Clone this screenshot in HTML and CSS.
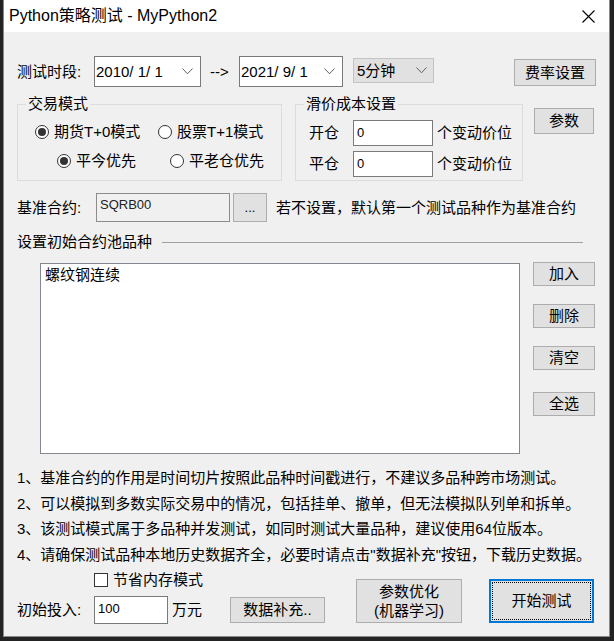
FILE: index.html
```html
<!DOCTYPE html>
<html lang="zh-CN">
<head>
<meta charset="utf-8">
<title>Python策略测试 - MyPython2</title>
<link rel="stylesheet" href="styles.css">
</head>
<body>
<div class="window">
  <div class="titlebar">
    <span class="title">Python策略测试 - MyPython2</span>
    <svg class="close" width="13" height="13" viewBox="0 0 13 13"><path d="M0.5 0.5L12.5 12.5M12.5 0.5L0.5 12.5" stroke="#000" stroke-width="1.1" fill="none"/></svg>
  </div>
  <div class="content">
    <div class="row-period">
      <span class="lbl lbl-period">测试时段:</span>
      <div class="datebox d1">
        <span class="datetext">2010/ 1/ 1</span>
        <svg class="chev" width="11" height="7" viewBox="0 0 11 7"><polyline points="0.5,0.5 5.5,5.8 10.5,0.5" fill="none" stroke="#606060" stroke-width="1"/></svg>
      </div>
      <span class="arrow">--&gt;</span>
      <div class="datebox d2">
        <span class="datetext">2021/ 9/ 1</span>
        <svg class="chev" width="11" height="7" viewBox="0 0 11 7"><polyline points="0.5,0.5 5.5,5.8 10.5,0.5" fill="none" stroke="#606060" stroke-width="1"/></svg>
      </div>
      <div class="combo">
        <span>5分钟</span>
        <svg class="chev" width="11" height="7" viewBox="0 0 11 7"><polyline points="0.5,0.5 5.5,5.8 10.5,0.5" fill="none" stroke="#606060" stroke-width="1"/></svg>
      </div>
      <button class="btn btn-fee">费率设置</button>
    </div>

    <div class="row-groups">
      <fieldset class="group g1">
        <legend>交易模式</legend>
        <div class="g1-inner">
          <div class="radio-row">
            <label class="radio-item ri1"><span class="radio"><span class="dot"></span></span>期货T+0模式</label>
            <label class="radio-item"><span class="radio"></span>股票T+1模式</label>
          </div>
          <div class="radio-row rr2">
            <label class="radio-item ri3"><span class="radio"><span class="dot"></span></span>平今优先</label>
            <label class="radio-item"><span class="radio"></span>平老仓优先</label>
          </div>
        </div>
      </fieldset>
      <fieldset class="group g2">
        <legend>滑价成本设置</legend>
        <div class="g2-inner">
          <div class="slip-row">
            <span class="slip-lbl">开仓</span>
            <div class="field slip-in">0</div>
            <span class="unit">个变动价位</span>
          </div>
          <div class="slip-row sr2">
            <span class="slip-lbl">平仓</span>
            <div class="field slip-in">0</div>
            <span class="unit">个变动价位</span>
          </div>
        </div>
      </fieldset>
      <button class="btn btn-param">参数</button>
    </div>

    <div class="row-base">
      <span class="lbl lbl-base">基准合约:</span>
      <div class="field ref-in">SQRB00</div>
      <button class="btn btn-browse">...</button>
      <span class="hint">若不设置，默认第一个测试品种作为基准合约</span>
    </div>

    <div class="row-sep">
      <span>设置初始合约池品种</span>
      <div class="sep-line"></div>
    </div>

    <div class="row-list">
      <div class="listbox">螺纹钢连续</div>
      <div class="side-btns">
        <button class="btn side">加入</button>
        <button class="btn side">删除</button>
        <button class="btn side">清空</button>
        <button class="btn side last">全选</button>
      </div>
    </div>

    <div class="notes">
      <div>1、基准合约的作用是时间切片按照此品种时间戳进行，不建议多品种跨市场测试。</div>
      <div>2、可以模拟到多数实际交易中的情况，包括挂单、撤单，但无法模拟队列单和拆单。</div>
      <div>3、该测试模式属于多品种并发测试，如同时测试大量品种，建议使用64位版本。</div>
      <div>4、请确保测试品种本地历史数据齐全，必要时请点击"数据补充"按钮，下载历史数据。</div>
    </div>

    <div class="row-bottom">
      <div class="bottom-left">
        <label class="cb-row"><span class="checkbox"></span>节省内存模式</label>
        <div class="in-row">
          <span class="lbl lbl-init">初始投入:</span>
          <div class="field init-in">100</div>
          <span class="unit">万元</span>
        </div>
      </div>
      <button class="btn btn-data">数据补充..</button>
      <button class="btn btn-opt"><span>参数优化</span><span>(机器学习)</span></button>
      <button class="btn btn-start">开始测试</button>
    </div>
  </div>
</div>
</body>
</html>
```

FILE: styles.css
```css
* { box-sizing: border-box; }
html, body { margin: 0; padding: 0; }
body {
  width: 614px;
  height: 641px;
  overflow: hidden;
  background: #232323;
  font-family: "Liberation Sans", "Noto Sans CJK SC", sans-serif;
  font-size: 15px;
  color: #000;
}
.window {
  margin-left: 3px;
  width: 607px;
  height: 637px;
  background: #f0f0f0;
  border: 1px solid #8a8a8a;
  border-top: none;
  display: flex;
  flex-direction: column;
}
.titlebar {
  flex: none;
  height: 32px;
  background: #fff;
  display: flex;
  align-items: center;
  justify-content: space-between;
  padding-left: 5px;
  padding-right: 14px;
}
.title { font-size: 16px; line-height: 20px; }
.content {
  padding: 0 13px;
  display: flex;
  flex-direction: column;
}
.btn {
  font: inherit;
  color: #000;
  background: #e1e1e1;
  border: 1px solid #adadad;
  padding: 0;
  margin: 0;
  display: flex;
  align-items: center;
  justify-content: center;
  line-height: 20px;
}
.field {
  background: #fff;
  border: 1px solid #7a7a7a;
  font-size: 13px;
  line-height: 16px;
  padding-left: 3px;
}
.lbl { line-height: 20px; }

/* row 1 */
.row-period {
  margin-top: 24px;
  display: flex;
  align-items: flex-start;
  height: 31px;
}
.lbl-period { width: 77px; line-height: 31px; }
.datebox {
  height: 31px;
  background: #fff;
  border: 1px solid #7a7a7a;
  display: flex;
  align-items: center;
  justify-content: space-between;
  padding: 0 7px 0 1px;
}
.datetext { white-space: pre; line-height: 20px; padding-top: 1px; }
.d1 { width: 107px; }
.d2 { width: 104px; }
.arrow { width: 38px; padding-left: 9px; line-height: 31px; }
.combo {
  margin-left: 10px;
  margin-top: 2px;
  width: 81px;
  height: 25px;
  background: #e1e1e1;
  border: 1px solid #c4c4c4;
  display: flex;
  align-items: center;
  justify-content: space-between;
  padding: 0 6px 0 3px;
  line-height: 20px;
}
.btn-fee { margin-left: auto; margin-top: 3px; width: 82px; height: 27px; }

/* row 2 */
.row-groups {
  margin-top: 7px;
  display: flex;
  align-items: flex-start;
}
.group {
  margin: 0;
  padding: 0;
  border: 1px solid #dcdcdc;
  min-width: 0;
}
.group legend {
  margin-left: 8px;
  padding: 0 2px;
  line-height: 20px;
}
.g1 { width: 265px; }
.g1-inner { padding: 8px 0 9px 17px; }
.radio-row { display: flex; align-items: center; height: 20px; }
.rr2 { margin-top: 9px; padding-left: 22px; }
.radio-item { display: flex; align-items: center; line-height: 20px; }
.ri1 { width: 123px; }
.ri3 { width: 113px; }
.radio {
  width: 14px;
  height: 14px;
  border: 1px solid #333;
  border-radius: 50%;
  background: #fff;
  display: inline-flex;
  align-items: center;
  justify-content: center;
  margin-right: 5px;
}
.dot { width: 8px; height: 8px; border-radius: 50%; background: #333; }
.g2 { width: 228px; margin-left: 13px; }
.g2-inner { padding: 6px 0 3px 13px; }
.slip-row { display: flex; align-items: center; height: 26px; }
.sr2 { margin-top: 5px; }
.slip-lbl { width: 44px; line-height: 20px; }
.slip-in { width: 80px; height: 26px; display: flex; align-items: center; }
.unit { margin-left: 4px; line-height: 20px; }
.btn-param { margin-left: 11px; margin-top: 14px; width: 60px; height: 26px; }

/* row 3 */
.row-base {
  margin-top: 12px;
  display: flex;
  align-items: center;
  height: 29px;
}
.lbl-base { width: 79px; }
.ref-in {
  width: 134px;
  height: 29px;
  background: #f0f0f0;
  border-color: #8c8c8c;
  padding-top: 3px;
  color: #222;
}
.btn-browse { margin-left: 3px; width: 34px; height: 29px; font-size: 13px; }
.hint { margin-left: 9px; line-height: 20px; }

/* row 4 */
.row-sep {
  margin-top: 10px;
  height: 20px;
  display: flex;
  align-items: center;
  line-height: 20px;
}
.sep-line {
  flex: 1;
  margin-left: 10px;
  margin-right: 13px;
  border-top: 1px solid #a0a0a0;
}

/* row 5 */
.row-list {
  margin-top: 10px;
  display: flex;
  align-items: flex-start;
}
.listbox {
  margin-left: 23px;
  margin-top: 1px;
  width: 480px;
  height: 191px;
  background: #fff;
  border: 1px solid #828790;
  padding: 1px 4px;
  line-height: 20px;
}
.side-btns {
  margin-left: 13px;
  display: flex;
  flex-direction: column;
}
.side { width: 62px; height: 24px; margin-bottom: 18px; }
.side:nth-child(3) { margin-bottom: 22px; }
.side.last { margin-bottom: 0; }

/* notes */
.notes {
  margin-top: 11px;
  line-height: 25.7px;
  white-space: nowrap;
}

/* bottom */
.row-bottom {
  margin-top: 2px;
  display: flex;
  align-items: flex-end;
}
.bottom-left { width: 213px; display: flex; flex-direction: column; }
.cb-row {
  margin-left: 77px;
  height: 20px;
  display: flex;
  align-items: center;
  line-height: 20px;
}
.checkbox {
  width: 14px;
  height: 14px;
  border: 1px solid #333;
  background: #fff;
  margin-right: 5px;
}
.in-row { margin-top: 6px; height: 28px; display: flex; align-items: center; }
.lbl-init { width: 77px; }
.init-in { width: 74px; height: 28px; padding-top: 4px; }
.btn-data { width: 95px; height: 26px; margin-bottom: 1px; }
.btn-opt {
  margin-left: 31px;
  width: 106px;
  height: 44px;
  margin-bottom: 1px;
  flex-direction: column;
  line-height: 19px;
}
.btn-start {
  margin-left: 27px;
  width: 105px;
  height: 44px;
  margin-bottom: 1px;
  border: 2px solid #0078d7;
  position: relative;
}
.btn-start::after {
  content: "";
  position: absolute;
  left: 1px;
  top: 1px;
  right: 1px;
  bottom: 1px;
  border: 1px dotted #000;
}
```
